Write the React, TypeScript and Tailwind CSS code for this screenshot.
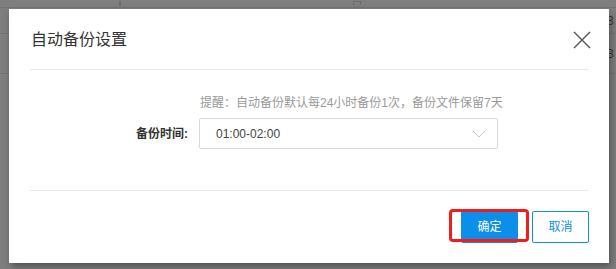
const font = "font-['Liberation_Sans','Noto_Sans_CJK_SC',sans-serif]";

const BackgroundTable = () => {
	return (
		<div className="absolute inset-0 flex flex-col">
			<div className="h-[8px] border-b border-[#757575] flex items-start">
				<div className="ml-[119px] mt-[1px] w-[2px] h-[5px] bg-[#6c6c6c]" />
				<div className="ml-[232px] mt-[1px] w-[8px] h-[4px] border-t border-x border-[#6c6c6c]" />
			</div>
			<div className="h-[26px] border-b border-[#757575] flex justify-end items-center pr-[2px]">
				<span className="text-[12px] text-[#3a3a3a]">B</span>
			</div>
			<div className="h-[40px] border-b border-[#757575] flex justify-end items-center pr-[2px]">
				<span className="text-[12px] text-[#3a3a3a]">B</span>
			</div>
		</div>
	);
};

const App = () => {
	return (
		<div className={`relative w-[616px] h-[269px] overflow-hidden bg-[#7f7f7f] ${font}`}>
			<BackgroundTable />
			<div className="relative pt-[9px] pl-[9px]">
				<div className="w-[600px] h-[254px] bg-white px-[21px] shadow-[2px_4px_8px_rgba(0,0,0,0.35)]">
					{/* header */}
					<div className="h-[61px] border-b border-[#e8e8e8] flex items-center justify-between pt-[1px]">
						<h3 className="text-[16px] leading-[20px] text-[#333] pl-[1px]">自动备份设置</h3>
						<svg width="18" height="18" viewBox="0 0 18 18" className="mr-[-3px]">
							<path d="M1 1 L17 17 M17 1 L1 17" stroke="#555" strokeWidth="1.4" fill="none" />
						</svg>
					</div>

					{/* body */}
					<div className="h-[121px] border-b border-[#e8e8e8] pt-[25px]">
						<p className="ml-[170px] text-[12px] leading-[16px] text-[#999] whitespace-nowrap">
							提醒：自动备份默认每24小时备份1次，备份文件保留7天
						</p>
						<div className="flex items-center mt-[7px]">
							<label className="w-[158px] text-right text-[12px] font-bold text-[#333]">备份时间:</label>
							<div className="ml-[11px] w-[299px] h-[31px] border border-[#d9d9d9] rounded-[2px] flex items-center justify-between pl-[16px] pr-[11px]">
								<span className="text-[12px] text-[#444]">01:00-02:00</span>
								<svg width="14" height="8" viewBox="0 0 14 8">
									<path d="M1 1 L7 7 L13 1" stroke="#c8c8c8" strokeWidth="1" fill="none" />
								</svg>
							</div>
						</div>
					</div>

					{/* footer */}
					<div className="flex justify-end pt-[20px] mr-[-1px]">
						<div className="relative">
							<button className="w-[57px] h-[32px] bg-[#0b8fea] text-white text-[12px] rounded-[2px]">
								确定
							</button>
							<div className="absolute left-[-12px] top-[-2px] w-[80px] h-[33px] border-[3px] border-[#f01d1d] rounded-[4px]" />
						</div>
						<button className="ml-[14px] w-[57px] h-[32px] bg-white border border-[#0b8fea] text-[#0b8fea] text-[12px] rounded-[2px]">
							取消
						</button>
					</div>
				</div>
			</div>
		</div>
	);
};

export default App;
